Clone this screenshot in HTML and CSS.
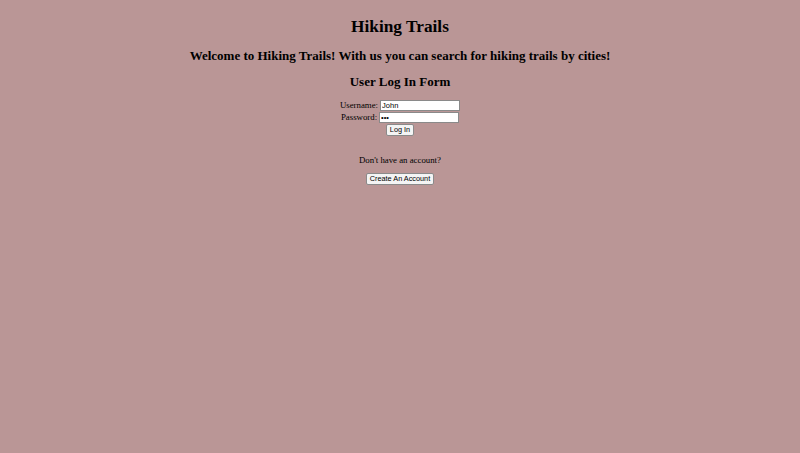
FILE: index.html
```html
<!DOCTYPE html>
<html>
<head>
<meta charset="utf-8">
<link rel="stylesheet" href="styles.css">
</head>
<body>
<div class="page">
  <h1 class="title">Hiking Trails</h1>
  <h2 class="subtitle">Welcome to Hiking Trails! With us you can search for hiking trails by cities!</h2>
  <h2 class="subtitle">User Log In Form</h2>
  <form class="login">
    <div class="row"><label>Username: </label><input class="field" type="text" value="John"></div>
    <div class="row"><label>Password: </label><input class="field" type="password" value="abc"></div>
    <div class="row"><button class="btn" type="button">Log In</button></div>
  </form>
  <p class="note">Don't have an account?</p>
  <div class="row"><button class="btn" type="button">Create An Account</button></div>
</div>
</body>
</html>
```
FILE: styles.css
```css
html, body {
  margin: 0;
  padding: 0;
  background: #ba9696;
}
body {
  font-family: "Liberation Serif", "Times New Roman", serif;
  font-size: 8.8px;
  color: #000;
}
.page {
  padding: 5px 4px;
  text-align: center;
}
.title {
  font-size: 17.3px;
  line-height: 20px;
  margin: 11.6px 0;
}
.subtitle {
  font-size: 13px;
  line-height: 15px;
  margin: 10.8px 0;
}
.login {
  margin: 0 0 19px;
}
.row {
  display: flex;
  justify-content: center;
  align-items: center;
  gap: 2px;
  line-height: 10px;
  margin-bottom: 1px;
}
.row label {
  font-size: 8.8px;
}
.field {
  box-sizing: border-box;
  width: 80px;
  height: 11px;
  margin: 0;
  padding: 0 1px;
  border: 1px solid #8a8a8a;
  background: #fff;
  font-family: "Liberation Sans", Arial, sans-serif;
  font-size: 7.5px;
  color: #000;
}
.btn {
  box-sizing: border-box;
  height: 12px;
  margin: 0;
  padding: 0 3px;
  border: 1px solid #8a8a8a;
  border-radius: 2px;
  background: #f4f4f4;
  font-family: "Liberation Sans", Arial, sans-serif;
  font-size: 7.3px;
  line-height: 10px;
  color: #000;
}
.note {
  margin: 8.66px 0;
  line-height: 10px;
}
```
